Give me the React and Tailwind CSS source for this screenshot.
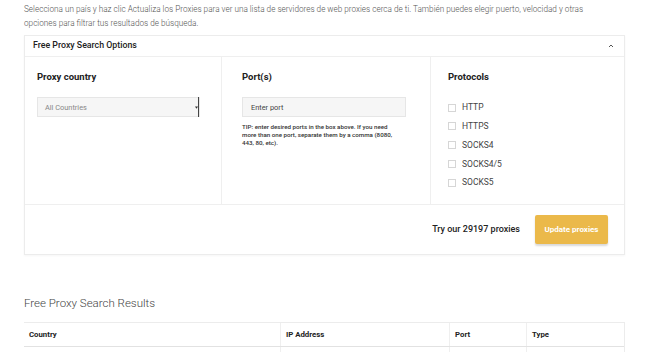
import React from "react";

function Check({ label }) {
  return (
    <div className="flex items-center gap-[6px] h-[18.8px]">
      <span className="w-[8px] h-[8px] border border-[#d6d6d6] bg-white"></span>
      <span className="text-[8.5px] text-[#444]">{label}</span>
    </div>
  );
}

export default function App() {
  return (
    <div className="w-[650px] h-[352px] bg-white overflow-hidden font-['Roboto'] text-[#333]">
      <div className="px-[24px] pt-[2px]">
        <p className="text-[8.2px] leading-[14px] text-[#555] font-light w-[590px]">
          Selecciona un país y haz clic Actualiza los Proxies para ver una lista de servidores de web proxies cerca de ti. También puedes elegir puerto, velocidad y otras opciones para filtrar tus resultados de búsqueda.
        </p>

        <div className="mt-[5px] w-[601px] border border-[#ececec] shadow-[0_1px_2px_rgba(0,0,0,0.04)]">
          <div className="h-[21px] flex items-center justify-between pl-[8px] pr-[10px] border-b border-[#efefef]">
            <span className="text-[8.8px] font-medium text-[#222]">Free Proxy Search Options</span>
            <svg width="6" height="4" viewBox="0 0 6 4"><path d="M1 3 L3 1 L5 3" stroke="#555" strokeWidth="1" fill="none" /></svg>
          </div>
          <div className="grid grid-cols-[197px_209px_1fr] h-[148px] border-b border-[#efefef]">
            <div className="border-r border-[#efefef] pl-[12px] pt-[13px]">
              <div className="text-[9.5px] font-bold text-[#222]">Proxy country</div>
              <div className="mt-[13px] w-[163px] h-[20px] bg-[#f6f6f6] border border-[#e6e6e6] flex items-center justify-between pl-[7px] pr-0">
                <span className="text-[7.4px] text-[#888]">All Countries</span>
                <div className="h-[20px] w-[5px] flex flex-col items-center justify-center border-r border-[#444]">
                  <svg width="3" height="3" viewBox="0 0 4 3"><path d="M0 0 L4 0 L2 3 Z" fill="#333" /></svg>
                </div>
              </div>
            </div>
            <div className="border-r border-[#efefef] pl-[20px] pt-[13px]">
              <div className="text-[9.5px] font-bold text-[#222]">Port(s)</div>
              <div className="mt-[13px] w-[164px] h-[20px] bg-[#f6f6f6] border border-[#e6e6e6] flex items-center pl-[8px]">
                <span className="text-[7.4px] text-[#444]">Enter port</span>
              </div>
              <p className="mt-[6px] w-[158px] text-[6.2px] leading-[8px] font-medium text-[#333]">
                TIP: enter desired ports in the box above. If you need more than one port, separate them by a comma (8080, 443, 80, etc).
              </p>
            </div>
            <div className="pl-[17px] pt-[13px]">
              <div className="text-[9.5px] font-bold text-[#222]">Protocols</div>
              <div className="mt-[14px] flex flex-col">
                <Check label="HTTP" />
                <Check label="HTTPS" />
                <Check label="SOCKS4" />
                <Check label="SOCKS4/5" />
                <Check label="SOCKS5" />
              </div>
            </div>
          </div>
          <div className="h-[49px] flex items-center justify-end pr-[16px] gap-[15px]">
            <span className="text-[9px] font-medium text-[#222]">Try our 29197 proxies</span>
            <button className="w-[73px] h-[29px] bg-[#ebb94a] rounded-[2px] shadow-[0_2px_2px_rgba(0,0,0,0.15)] text-white text-[8px] font-bold">
              Update proxies
            </button>
          </div>
        </div>

        <h2 className="mt-[40px] text-[11.5px] font-light text-[#444]">Free Proxy Search Results</h2>

        <div className="mt-[10px] w-[601px] border-t border-[#ececec] border-r">
          <div className="grid grid-cols-[257px_169px_77px_1fr] h-[24px] items-center border-b border-[#e2e2e2] text-[7.8px] font-bold text-[#222]">
            <div className="pl-[5px] border-r border-[#efefef] h-full flex items-center">Country</div>
            <div className="pl-[5px] border-r border-[#efefef] h-full flex items-center">IP Address</div>
            <div className="pl-[5px] border-r border-[#efefef] h-full flex items-center">Port</div>
            <div className="pl-[5px] h-full flex items-center">Type</div>
          </div>
          <div className="grid grid-cols-[257px_169px_77px_1fr] h-[20px]">
            <div className="border-r border-[#efefef]"></div>
            <div className="border-r border-[#efefef]"></div>
            <div className="border-r border-[#efefef]"></div>
            <div></div>
          </div>
        </div>
      </div>
    </div>
  );
}
